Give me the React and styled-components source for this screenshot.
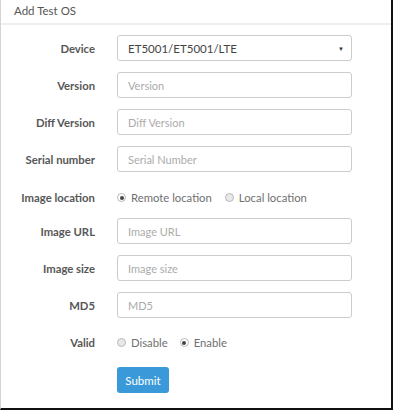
import React from 'react'
import styled, { createGlobalStyle } from 'styled-components'

const Global = createGlobalStyle`
body{
  margin:0;
  background:#fff;
  font-family: Lato, 'Open Sans', sans-serif;
}
*{ box-sizing:border-box; }
`

const Panel = styled.div`
width:393px;
height:410px;
background:#fff;
border-left:1px solid #d4d4d4;
border-right:2px solid #111;
border-bottom:2px solid #111;
`

const Header = styled.div`
height:25px;
padding:4px 0 0 13px;
font-size:11.5px;
color:#555;
border-bottom:2px solid #eee;
`

const Form = styled.form`
display:grid;
grid-template-columns:94px 235px;
column-gap:22px;
row-gap:11px;
padding-top:10px;
align-items:center;
`

const Label = styled.label`
text-align:right;
font-size:11.3px;
font-weight:700;
color:#575757;
padding-top:${p => p.$pt || 0}px;
`

const Input = styled.input`
height:26px;
width:235px;
border:1px solid #ccc;
border-radius:3px;
padding:0 10px;
font-family:inherit;
font-size:11px;
color:#555;
outline:none;
&::placeholder{ color:#ababab; }
`

const SelectBox = styled.div`
height:26px;
border:1px solid #ccc;
border-radius:3px;
padding:0 10px;
display:flex;
align-items:center;
justify-content:space-between;
font-size:11.5px;
color:#444;
span.caret{
  font-size:6px;
  color:#333;
  margin-right:-3px;
}
`

const RadioGroup = styled.div`
display:flex;
align-items:center;
gap:${p => p.$gap || 12}px;
height:${p => p.$h || 26}px;
padding-top:${p => p.$pt || 0}px;
`

const RadioLabel = styled.label`
display:flex;
align-items:center;
gap:5px;
font-size:11.3px;
color:#707070;
`

const Radio = styled.span`
width:9px;
height:9px;
border-radius:50%;
border:1px solid #b8b8b8;
background:${p => (p.$on ? '#fff' : '#e8e8e8')};
display:flex;
align-items:center;
justify-content:center;
&::after{
  content:'';
  width:4px;
  height:4px;
  border-radius:50%;
  background:${p => (p.$on ? '#444' : 'transparent')};
}
`

const Button = styled.button`
grid-column:2;
justify-self:start;
margin-top:0;
height:26px;
width:52px;
border:none;
border-radius:3px;
background:#3a9ad9;
color:#fff;
font-family:inherit;
font-size:11.5px;
padding:0;
`

const fields = [
  ['Version', 'Version'],
  ['Diff Version', 'Diff Version'],
  ['Serial number', 'Serial Number'],
]

const fields2 = [
  ['Image URL', 'Image URL'],
  ['Image size', 'Image size'],
  ['MD5', 'MD5'],
]

const App = () => {
  return (
    <>
      <Global />
      <Panel>
        <Header>Add Test OS</Header>
        <Form onSubmit={e => e.preventDefault()}>
          <Label>Device</Label>
          <SelectBox>
            <span>ET5001/ET5001/LTE</span>
            <span className="caret">▼</span>
          </SelectBox>
          {fields.map(([l, p]) => (
            <React.Fragment key={l}>
              <Label>{l}</Label>
              <Input placeholder={p} />
            </React.Fragment>
          ))}
          <Label $pt={5}>Image location</Label>
          <RadioGroup $h={24} $pt={5} $gap={13}>
            <RadioLabel><Radio $on />Remote location</RadioLabel>
            <RadioLabel><Radio />Local location</RadioLabel>
          </RadioGroup>
          {fields2.map(([l, p]) => (
            <React.Fragment key={l}>
              <Label>{l}</Label>
              <Input placeholder={p} />
            </React.Fragment>
          ))}
          <Label>Valid</Label>
          <RadioGroup $h={27} $gap={12}>
            <RadioLabel><Radio />Disable</RadioLabel>
            <RadioLabel><Radio $on />Enable</RadioLabel>
          </RadioGroup>
          <Button type="submit">Submit</Button>
        </Form>
      </Panel>
    </>
  )
}

export default App
